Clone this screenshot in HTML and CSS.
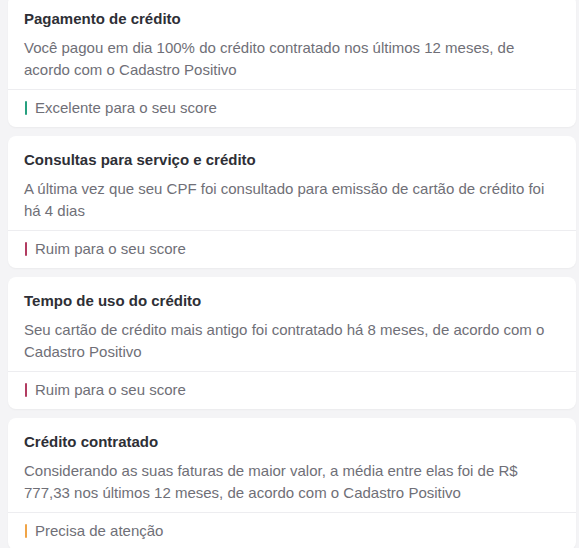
FILE: index.html
```html
<!DOCTYPE html>
<html lang="pt-BR">
<head>
<meta charset="utf-8">
<link rel="stylesheet" href="styles.css">
</head>
<body>
<div class="list">
  <section class="card">
    <div class="body">
      <h2 class="title">Pagamento de crédito</h2>
      <p class="desc">Você pagou em dia 100% do crédito contratado nos últimos 12 meses, de acordo com o Cadastro Positivo</p>
    </div>
    <div class="foot"><span class="bar good"></span>Excelente para o seu score</div>
  </section>
  <section class="card">
    <div class="body">
      <h2 class="title">Consultas para serviço e crédito</h2>
      <p class="desc">A última vez que seu CPF foi consultado para emissão de cartão de crédito foi há 4 dias</p>
    </div>
    <div class="foot"><span class="bar bad"></span>Ruim para o seu score</div>
  </section>
  <section class="card">
    <div class="body">
      <h2 class="title">Tempo de uso do crédito</h2>
      <p class="desc">Seu cartão de crédito mais antigo foi contratado há 8 meses, de acordo com o Cadastro Positivo</p>
    </div>
    <div class="foot"><span class="bar bad"></span>Ruim para o seu score</div>
  </section>
  <section class="card">
    <div class="body">
      <h2 class="title">Crédito contratado</h2>
      <p class="desc">Considerando as suas faturas de maior valor, a média entre elas foi de R$ 777,33 nos últimos 12 meses, de acordo com o Cadastro Positivo</p>
    </div>
    <div class="foot"><span class="bar warn"></span>Precisa de atenção</div>
  </section>
</div>
</body>
</html>
```
FILE: styles.css
```css
html, body {
  margin: 0;
  padding: 0;
  background: #f4f4f6;
  font-family: "Liberation Sans", Arial, sans-serif;
  overflow: hidden;
}
.list {
  display: flex;
  flex-direction: column;
  gap: 9px;
  margin-top: -5px;
  padding: 0 3px 0 8px;
}
.card {
  background: #ffffff;
  border-radius: 8px;
  box-shadow: 0 1px 2px rgba(0, 0, 0, 0.04);
}
.body {
  padding: 14px 16px 8px 16px;
  border-bottom: 1px solid #ededf0;
}
.title {
  margin: 0;
  font-size: 15px;
  line-height: 20px;
  font-weight: bold;
  color: #2e2f36;
}
.desc {
  margin: 8px 0 0 0;
  font-size: 15px;
  line-height: 22px;
  color: #6f6f77;
}
.foot {
  display: flex;
  align-items: center;
  gap: 8px;
  padding: 8px 16px 9px 16px;
  font-size: 15px;
  line-height: 20px;
  color: #6f6f77;
}
.bar {
  width: 2px;
  height: 14px;
  border-radius: 1px;
  flex: none;
  margin-left: 1px;
}
.good { background: #26a07f; }
.bad { background: #b23b60; }
.warn { background: #f0a447; }
```
